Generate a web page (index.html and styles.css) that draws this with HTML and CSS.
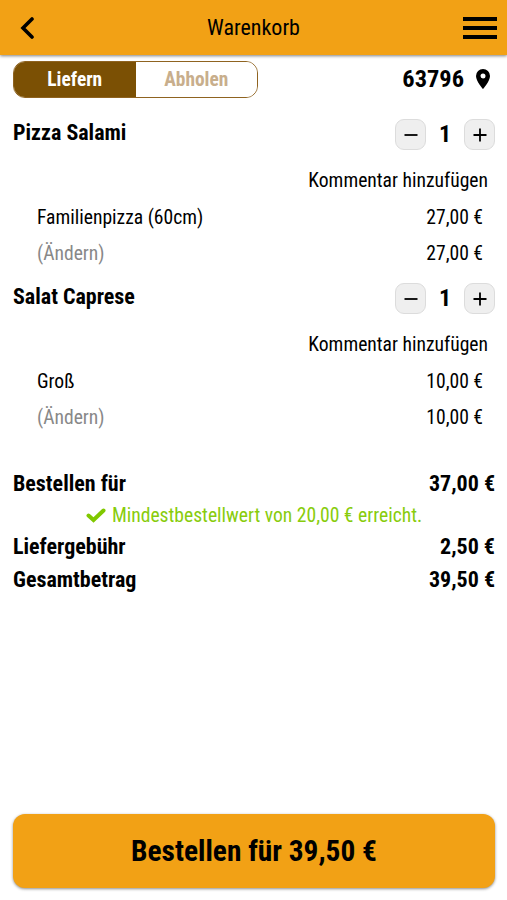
FILE: index.html
```html
<!DOCTYPE html>
<html lang="de">
<head>
  <meta charset="UTF-8" />
  <meta name="viewport" content="width=device-width, initial-scale=1.0"/>
  <title>Warenkorb</title>
  <link rel="stylesheet" href="styles.css">
</head>
<body>

  <header class="topbar">
    <svg class="back" viewBox="0 0 14 22"><path d="M12 2 L3 11 L12 20" /></svg>
    <h1>Warenkorb</h1>
    <div class="menu"><i></i><i></i><i></i></div>
  </header>

  <main class="cart">
    <div class="delivery">
      <div class="toggle">
        <button class="active">Liefern</button>
        <button>Abholen</button>
      </div>
      <div class="zip">
        <span>63796</span>
        <svg class="pin" viewBox="0 0 14 20"><path fill-rule="evenodd" d="M7 0a7 7 0 0 0-7 7c0 5.200 7 13 7 13s7-7.800 7-13a7 7 0 0 0-7-7zm0 4.500a2.500 2.500 0 1 1 0 5a2.500 2.500 0 0 1 0-5z" /></svg>
      </div>
    </div>

    <section class="item">
      <div class="item-head">
        <h2>Pizza Salami</h2>
        <div class="counter">
          <button><svg viewBox="0 0 14 14"><path d="M0.500 7h13" /></svg></button>
          <span>1</span>
          <button><svg viewBox="0 0 14 14"><path d="M0.500 7h13M7 0.500v13" /></svg></button>
        </div>
      </div>
      <a class="comment">Kommentar hinzufügen</a>
      <div class="row"><span>Familienpizza (60cm)</span><span>27,00 €</span></div>
      <div class="row"><span class="edit">(Ändern)</span><span>27,00 €</span></div>
    </section>

    <section class="item">
      <div class="item-head">
        <h2>Salat Caprese</h2>
        <div class="counter">
          <button><svg viewBox="0 0 14 14"><path d="M0.500 7h13" /></svg></button>
          <span>1</span>
          <button><svg viewBox="0 0 14 14"><path d="M0.500 7h13M7 0.500v13" /></svg></button>
        </div>
      </div>
      <a class="comment">Kommentar hinzufügen</a>
      <div class="row"><span>Groß</span><span>10,00 €</span></div>
      <div class="row"><span class="edit">(Ändern)</span><span>10,00 €</span></div>
    </section>

    <section class="totals">
      <div class="total"><span>Bestellen für</span><span>37,00 €</span></div>
      <p class="minimum">
        <svg viewBox="0 0 20 15"><path d="M2.500 7.500 L7.500 12 L17.500 2.500" /></svg>
        <span>Mindestbestellwert von 20,00 € erreicht.</span>
      </p>
      <div class="total"><span>Liefergebühr</span><span>2,50 €</span></div>
      <div class="total"><span>Gesamtbetrag</span><span>39,50 €</span></div>
    </section>

    <button class="order">Bestellen für 39,50 €</button>
  </main>

</body>
</html>
```
FILE: styles.css
```css
* {
  box-sizing: border-box;
  margin: 0;
  padding: 0;
}

body {
  height: 100vh;
  display: flex;
  flex-direction: column;
  background: #fff;
  color: #000;
  font-family: "Roboto Condensed", Roboto, sans-serif;
  font-stretch: 75%;
  font-size: 19.6px;
}

button {
  font: inherit;
  color: inherit;
  border: none;
  cursor: pointer;
}

.topbar {
  display: grid;
  grid-template-columns: 34px 1fr 34px;
  align-items: center;
  height: 55px;
  padding: 0 10px 0 20px;
  background: #f2a115;
  box-shadow: 0 1px 3px rgba(0,0,0,0.5);
}

.topbar h1 {
  font-size: 22px;
  font-weight: 400;
  text-align: center;
  padding-right: 10px;
}

.back {
  width: 14px;
  height: 22px;
  fill: none;
  stroke: #000;
  stroke-width: 3.6;
  stroke-linecap: round;
}

.menu {
  display: flex;
  flex-direction: column;
  gap: 5px;
}

.menu i {
  height: 4px;
  background: #000;
}

.cart {
  flex: 1;
  display: flex;
  flex-direction: column;
  padding: 6px 12px 12px 13px;
}

.delivery {
  display: flex;
  justify-content: space-between;
  height: 37px;
}

.toggle {
  display: flex;
  width: 245px;
  border: 1px solid #8f6320;
  border-radius: 12px;
  overflow: hidden;
  font-size: 19.4px;
  font-weight: 700;
}

.toggle button {
  flex: 1;
  padding-bottom: 1px;
  background: #fff;
  color: #c8ae8c;
}

.toggle .active {
  background: #7b5004;
  color: #fff;
}

.zip {
  display: flex;
  align-items: center;
  gap: 12px;
  padding: 0 5px 2px 0;
  font-size: 24.4px;
  font-weight: 700;
}

.pin {
  width: 14px;
  height: 20px;
}

.item {
  height: 164px;
}

.delivery + .item {
  margin-top: 15px;
}

.item-head {
  display: flex;
  justify-content: space-between;
  height: 49px;
}

.item-head h2 {
  font-size: 22px;
  line-height: 40px;
}

.counter {
  display: flex;
  align-items: center;
  height: 43px;
  font-size: 24px;
  font-weight: 700;
}

.counter span {
  width: 38px;
  padding-bottom: 2px;
  text-align: center;
}

.counter button {
  display: flex;
  align-items: center;
  justify-content: center;
  width: 31px;
  height: 31px;
  background: #efefef;
  border: 1px solid #dcdcdc;
  border-radius: 9px;
}

.counter svg {
  width: 14px;
  height: 14px;
  stroke: #000;
  stroke-width: 1.8;
}

.comment {
  display: block;
  height: 38px;
  line-height: 38px;
  padding-right: 7px;
  text-align: right;
}

.row {
  display: flex;
  justify-content: space-between;
  height: 35.5px;
  line-height: 36px;
  padding: 0 12px 0 24px;
}

.edit {
  color: #888;
}

.totals {
  margin-top: 26px;
}

.total {
  display: flex;
  justify-content: space-between;
  height: 33px;
  line-height: 33px;
  font-size: 22px;
  font-weight: 700;
}

.minimum {
  display: flex;
  align-items: center;
  justify-content: center;
  gap: 6px;
  height: 30px;
  color: #88cc0c;
}

.minimum svg {
  width: 20px;
  height: 15px;
  fill: none;
  stroke: #80c800;
  stroke-width: 4;
  stroke-linecap: round;
}

.order {
  height: 74px;
  margin-top: auto;
  padding-bottom: 1px;
  background: #f2a115;
  border-radius: 12px;
  box-shadow: 0 1px 3px rgba(0,0,0,0.45);
  font-size: 29.4px;
  font-weight: 700;
}
```
